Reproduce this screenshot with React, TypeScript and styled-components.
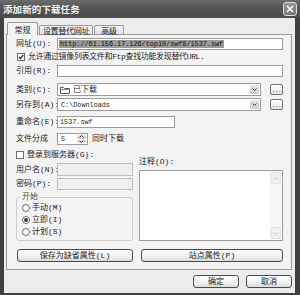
import React from "react";
import styled, { createGlobalStyle, css } from "styled-components";

const GlobalStyle = createGlobalStyle`
  html, body {
    margin: 0;
    padding: 0;
    background: #ffffff;
  }
  body {
    font-family: "Liberation Mono", "Noto Sans CJK SC", monospace;
    font-size: 8px;
    color: #1c1c1c;
  }
`;

const Window = styled.div`
  width: 300px;
  height: 295px;
  background: #404040;
  display: flex;
  flex-direction: column;
`;

const TitleBar = styled.div`
  height: 18px;
  flex-shrink: 0;
  display: flex;
  align-items: center;
  padding: 0 3px 0 3px;
  background: linear-gradient(#6c6c6c, #555555 40%, #4a4a4a);
`;

const Title = styled.div`
  flex: 1;
  font-family: "Noto Sans CJK SC", sans-serif;
  font-weight: 700;
  font-size: 9.5px;
  letter-spacing: 0.1px;
  color: #f4f4f4;
`;

const CloseButton = styled.div`
  width: 14px;
  height: 14px;
  box-sizing: border-box;
  border: 1px solid #dcdcdc;
  border-radius: 3px;
  background: linear-gradient(#969696, #757575);
  display: flex;
  align-items: center;
  justify-content: center;
`;

const Client = styled.div`
  flex: 1;
  margin: 0 5px 2px 4px;
  background: #ececec;
  display: flex;
  flex-direction: column;
`;

const TabStrip = styled.div`
  height: 12px;
  margin-top: 4px;
  padding-left: 3px;
  display: flex;
  align-items: flex-end;
`;

const Tab = styled.div<{ $active?: boolean; $w: number }>`
  width: ${({ $w }) => $w}px;
  box-sizing: border-box;
  border: 1px solid #9a9a9a;
  border-bottom: none;
  border-radius: 2px 2px 0 0;
  display: flex;
  align-items: center;
  justify-content: center;
  white-space: nowrap;
  position: relative;
  ${({ $active }) =>
    $active
      ? css`
          height: 13px;
          margin-bottom: -1px;
          background: #f4f4f4;
          z-index: 1;
        `
      : css`
          height: 9px;
          margin-left: 1px;
          background: linear-gradient(#f6f6f6, #e2e2e2);
          letter-spacing: -0.3px;
        `}
`;

const Panel = styled.div`
  margin-left: 2px;
  width: 286px;
  height: 236px;
  box-sizing: border-box;
  border: 1px solid #9a9a9a;
  background: #f3f3f3;
  padding: 0 8px 0 9px;
  display: flex;
  flex-direction: column;
`;

const FieldRow = styled.div<{ $mt: number; $h: number }>`
  margin-top: ${({ $mt }) => $mt}px;
  height: ${({ $h }) => $h}px;
  display: flex;
  align-items: center;
  flex-shrink: 0;
`;

const Label = styled.div`
  width: 41px;
  flex-shrink: 0;
  white-space: nowrap;
  line-height: 10px;
`;

const Text = styled.span<{ $ml?: number; $tight?: boolean }>`
  margin-left: ${({ $ml }) => $ml ?? 0}px;
  white-space: nowrap;
  line-height: 10px;
  ${({ $tight }) =>
    $tight &&
    css`
      letter-spacing: -0.35px;
    `}
`;

const TextBox = styled.div<{ $w?: number; $disabled?: boolean }>`
  ${({ $w }) =>
    $w
      ? css`
          width: ${$w}px;
        `
      : css`
          flex: 1;
        `}
  height: 100%;
  box-sizing: border-box;
  border: 1px solid ${({ $disabled }) => ($disabled ? "#bdbdbd" : "#9c9c9c")};
  background: ${({ $disabled }) => ($disabled ? "#efefef" : "#ffffff")};
  display: flex;
  align-items: center;
  padding: 1px;
  overflow: hidden;
`;

const Value = styled.span<{ $selected?: boolean }>`
  font-family: "Liberation Mono", monospace;
  font-size: 6.8px;
  white-space: nowrap;
  height: 100%;
  display: flex;
  align-items: center;
  padding: 0 1px;
  ${({ $selected }) =>
    $selected &&
    css`
      background: #9a9a9a;
      color: #111111;
    `}
`;

const CheckBox = styled.div<{ $ml?: number }>`
  width: 8px;
  height: 8px;
  margin-left: ${({ $ml }) => $ml ?? 0}px;
  box-sizing: border-box;
  border: 1px solid #6c6c6c;
  background: #ffffff;
  flex-shrink: 0;
  display: flex;
  align-items: center;
  justify-content: center;
`;

const Combo = styled.div`
  width: 204px;
  height: 100%;
  box-sizing: border-box;
  border: 1px solid #9c9c9c;
  background: #ffffff;
  display: flex;
  align-items: center;
  padding-left: 2px;
`;

const ComboArrow = styled.div`
  margin-left: auto;
  width: 9px;
  height: calc(100% - 2px);
  margin-right: 1px;
  border-radius: 1px;
  background: linear-gradient(#e6e6e6, #cfcfcf);
  display: flex;
  align-items: center;
  justify-content: center;
`;

const BrowseButton = styled.div`
  width: 13px;
  height: 11px;
  margin-left: 9px;
  box-sizing: border-box;
  border: 1px solid #707070;
  border-radius: 2px;
  background: linear-gradient(#ffffff, #e4e4e4);
  display: flex;
  align-items: flex-end;
  justify-content: center;
  font-size: 6px;
  line-height: 7px;
  letter-spacing: -0.5px;
`;

const SpinBox = styled.div`
  width: 31px;
  height: 100%;
  box-sizing: border-box;
  border: 1px solid #9c9c9c;
  background: #ffffff;
  display: flex;
  align-items: center;
  padding: 1px 1px 1px 2px;
`;

const SpinButtons = styled.div`
  margin-left: auto;
  width: 9px;
  height: 100%;
  display: flex;
  flex-direction: column;
  gap: 1px;
`;

const SpinHalf = styled.div`
  flex: 1;
  border-radius: 1px;
  background: linear-gradient(#e4e4e4, #c9c9c9);
  display: flex;
  align-items: center;
  justify-content: center;
`;

const Columns = styled.div`
  margin-top: 3px;
  display: flex;
  gap: 6px;
`;

const LeftCol = styled.div`
  width: 117px;
  display: flex;
  flex-direction: column;
`;

const RightCol = styled.div`
  flex: 1;
  display: flex;
  flex-direction: column;
`;

const Group = styled.fieldset`
  margin: 2px 0 0 0;
  padding: 0 0 2px 5px;
  border: 1px solid #cfcfcf;
  border-radius: 3px;
  min-width: 0;
  display: flex;
  flex-direction: column;
`;

const GroupTitle = styled.legend`
  padding: 0 1px;
  margin-left: -1px;
  height: 10px;
  line-height: 10px;
  color: #505050;
`;

const RadioRow = styled.div`
  height: 12px;
  display: flex;
  align-items: center;
  gap: 2px;
`;

const Radio = styled.div<{ $checked?: boolean }>`
  width: 8px;
  height: 8px;
  box-sizing: border-box;
  border: 1px solid #6e6e6e;
  border-radius: 50%;
  background: #ffffff;
  display: flex;
  align-items: center;
  justify-content: center;
  &::after {
    content: "";
    width: 4px;
    height: 4px;
    border-radius: 50%;
    background: ${({ $checked }) => ($checked ? "#3a3a3a" : "transparent")};
  }
`;

const NoteArea = styled.div`
  margin-top: 4px;
  height: 71px;
  box-sizing: border-box;
  border: 1px solid #9c9c9c;
  background: #ffffff;
  display: flex;
  justify-content: flex-end;
`;

const ScrollBar = styled.div`
  width: 11px;
  margin: 1px 1px 1px 0;
  background: #f7f7f7;
  display: flex;
  flex-direction: column;
  justify-content: space-between;
`;

const ScrollArrow = styled.div`
  height: 10px;
  border: 1px solid #e2e2e2;
  border-radius: 2px;
  background: #f0f0f0;
  display: flex;
  align-items: center;
  justify-content: center;
`;

const PushButton = styled.div<{ $w: number; $ml?: number }>`
  width: ${({ $w }) => $w}px;
  height: 13px;
  margin-left: ${({ $ml }) => $ml ?? 0}px;
  box-sizing: border-box;
  border: 1px solid #4a4a4a;
  border-radius: 3px;
  background: linear-gradient(#ffffff, #f0f0f0 60%, #dadada);
  display: flex;
  align-items: center;
  justify-content: center;
  white-space: nowrap;
  line-height: 10px;
`;

const Footer = styled.div`
  margin-top: 5px;
  display: flex;
  justify-content: flex-end;
  gap: 7px;
  padding-right: 3px;
`;

const Chevron = ({ up, color = "#333" }: { up?: boolean; color?: string }) => (
  <svg width="5" height="3" viewBox="0 0 5 3">
    <polyline
      points={up ? "0.5,2.5 2.5,0.5 4.5,2.5" : "0.5,0.5 2.5,2.5 4.5,0.5"}
      fill="none"
      stroke={color}
      strokeWidth="1"
    />
  </svg>
);

const Folder = () => (
  <svg width="10" height="8" viewBox="0 0 10 8">
    <path d="M0.5 1.5 h3 l1 1 h5 v5 h-9 z" fill="#f4f4f4" stroke="#5a5a5a" strokeWidth="1" />
    <path d="M0.5 3.5 h9" stroke="#8a8a8a" strokeWidth="1" />
  </svg>
);

const Tick = () => (
  <svg width="6" height="6" viewBox="0 0 6 6">
    <polyline points="0.8,3 2.3,4.6 5.3,1" fill="none" stroke="#222" strokeWidth="1.3" />
  </svg>
);

const App = () => {
  return (
    <>
      <GlobalStyle />
      <Window>
        <TitleBar>
          <Title>添加新的下载任务</Title>
          <CloseButton>
            <svg width="8" height="8" viewBox="0 0 8 8">
              <path d="M1 1 L7 7 M7 1 L1 7" stroke="#ffffff" strokeWidth="1.7" />
            </svg>
          </CloseButton>
        </TitleBar>
        <Client>
          <TabStrip>
            <Tab $active $w={31}>常规</Tab>
            <Tab $w={54}>设置替代网址</Tab>
            <Tab $w={30}>高级</Tab>
          </TabStrip>
          <Panel>
            <FieldRow $mt={3} $h={12}>
              <Label>网址(U):</Label>
              <TextBox>
                <Value $selected>http://61.156.17.126/top10/swf8/1537.swf</Value>
              </TextBox>
            </FieldRow>
            <FieldRow $mt={2} $h={10}>
              <CheckBox $ml={1}>
                <Tick />
              </CheckBox>
              <Text $ml={3} $tight>
                允许通过镜像列表文件和Ftp查找功能发现替代URL.
              </Text>
            </FieldRow>
            <FieldRow $mt={3} $h={12}>
              <Label>引用(R):</Label>
              <TextBox />
            </FieldRow>
            <FieldRow $mt={6} $h={13}>
              <Label>类别(C):</Label>
              <Combo>
                <Folder />
                <Text $ml={3}>已下载</Text>
                <ComboArrow>
                  <Chevron />
                </ComboArrow>
              </Combo>
              <BrowseButton>...</BrowseButton>
            </FieldRow>
            <FieldRow $mt={2} $h={13}>
              <Label>另存到(A):</Label>
              <Combo>
                <Value>C:\Downloads</Value>
                <ComboArrow>
                  <Chevron />
                </ComboArrow>
              </Combo>
              <BrowseButton>...</BrowseButton>
            </FieldRow>
            <FieldRow $mt={5} $h={12}>
              <Label>重命名(E):</Label>
              <TextBox $w={118}>
                <Value>1537.swf</Value>
              </TextBox>
            </FieldRow>
            <FieldRow $mt={5} $h={12}>
              <Label>文件分成</Label>
              <SpinBox>
                <Value>5</Value>
                <SpinButtons>
                  <SpinHalf>
                    <Chevron up color="#444" />
                  </SpinHalf>
                  <SpinHalf>
                    <Chevron color="#444" />
                  </SpinHalf>
                </SpinButtons>
              </SpinBox>
              <Text $ml={4}>同时下载</Text>
            </FieldRow>
            <Columns>
              <LeftCol>
                <FieldRow $mt={2} $h={9}>
                  <CheckBox />
                  <Text $ml={3}>登录到服务器(G):</Text>
                </FieldRow>
                <FieldRow $mt={4} $h={13}>
                  <Label>用户名(N):</Label>
                  <TextBox $disabled />
                </FieldRow>
                <FieldRow $mt={2} $h={12}>
                  <Label>密码(P):</Label>
                  <TextBox $disabled />
                </FieldRow>
                <Group>
                  <GroupTitle>开始</GroupTitle>
                  <RadioRow>
                    <Radio />
                    <Text>手动(M)</Text>
                  </RadioRow>
                  <RadioRow>
                    <Radio $checked />
                    <Text>立即(I)</Text>
                  </RadioRow>
                  <RadioRow>
                    <Radio />
                    <Text>计划(S)</Text>
                  </RadioRow>
                </Group>
              </LeftCol>
              <RightCol>
                <FieldRow $mt={9} $h={9}>
                  <Text>注释(O):</Text>
                </FieldRow>
                <NoteArea>
                  <ScrollBar>
                    <ScrollArrow>
                      <Chevron up color="#bdbdbd" />
                    </ScrollArrow>
                    <ScrollArrow>
                      <Chevron color="#bdbdbd" />
                    </ScrollArrow>
                  </ScrollBar>
                </NoteArea>
              </RightCol>
            </Columns>
            <FieldRow $mt={8} $h={13}>
              <PushButton $w={116} $ml={1}>保存为缺省属性(L)</PushButton>
              <PushButton $w={142} $ml={8}>站点属性(P)</PushButton>
            </FieldRow>
          </Panel>
          <Footer>
            <PushButton $w={46}>确定</PushButton>
            <PushButton $w={46}>取消</PushButton>
          </Footer>
        </Client>
      </Window>
    </>
  );
};

export default App;
